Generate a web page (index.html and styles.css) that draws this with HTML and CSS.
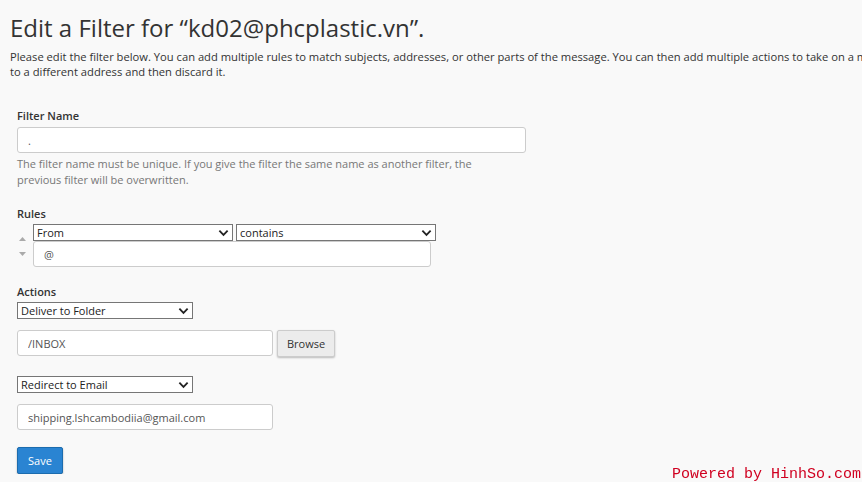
FILE: index.html
```html
<!DOCTYPE html>
<html lang="en">
<head>
  <meta charset="UTF-8">
  <title>Edit a Filter</title>
  <link rel="stylesheet" href="styles.css">
</head>
<body>
  <h1 class="page-title">Edit a Filter for “kd02@phcplastic.vn”.</h1>
  <p class="intro">Please edit the filter below. You can add multiple rules to match subjects, addresses, or other parts of the message. You can then add multiple actions to take on a message such as to deliver the message to a different address and then discard it.</p>

  <form class="filter-form">
    <div class="group">
      <label class="label">Filter Name</label>
      <input class="field name-field" type="text" value=".">
      <div class="help">The filter name must be unique. If you give the filter the same name as another filter, the previous filter will be overwritten.</div>
    </div>

    <div class="group group-rules">
      <label class="label">Rules</label>
      <div class="rule">
        <div class="arrows">
          <svg class="arrow" viewBox="0 0 7 4"><path d="M0 4 3.5 0 7 4z" /></svg>
          <svg class="arrow down" viewBox="0 0 7 4"><path d="M0 0h7L3.5 4z" /></svg>
        </div>
        <div class="rule-body">
          <div class="rule-selects">
            <div class="select sel-part"><span>From</span><svg viewBox="0 0 12 8"><path d="M1.5 1.5 6 6l4.5-4.5" /></svg></div>
            <div class="select sel-match"><span>contains</span><svg viewBox="0 0 12 8"><path d="M1.5 1.5 6 6l4.5-4.5" /></svg></div>
          </div>
          <input class="field rule-field" type="text" value="@">
        </div>
      </div>
    </div>

    <div class="group group-actions">
      <label class="label">Actions</label>
      <div class="select sel-action"><span>Deliver to Folder</span><svg viewBox="0 0 12 8"><path d="M1.5 1.5 6 6l4.5-4.5" /></svg></div>
      <div class="action-row">
        <input class="field short-field" type="text" value="/INBOX">
        <button type="button" class="btn-browse">Browse</button>
      </div>
      <div class="select sel-action"><span>Redirect to Email</span><svg viewBox="0 0 12 8"><path d="M1.5 1.5 6 6l4.5-4.5" /></svg></div>
      <div class="action-row">
        <input class="field short-field" type="text" value="shipping.lshcambodiia@gmail.com">
      </div>
    </div>

    <button type="button" class="btn-save">Save</button>
  </form>

  <div class="powered">Powered by HinhSo.com</div>
</body>
</html>
```

FILE: styles.css
```css
* {
  box-sizing: border-box;
}
body {
  margin: 0;
  padding: 0 10px;
  background: #f9f9f9;
  color: #333;
  font-family: 'Open Sans', sans-serif;
  font-size: 11px;
  overflow: hidden;
}
.page-title {
  margin: 0;
  padding-top: 12px;
  font-size: 24px;
  font-weight: 400;
  line-height: 32px;
  color: #333;
}
.intro {
  margin: 5px 0 0;
  font-size: 11.2px;
  line-height: 15px;
  width: 1065px;
}
.filter-form {
  padding: 29px 7px 0;
}
.group {
  margin-bottom: 18px;
}
.group-rules {
  margin-bottom: 17px;
}
.label {
  display: block;
  font-weight: 600;
  font-size: 11px;
  line-height: 16px;
  margin-bottom: 3px;
  color: #333;
}
.group-actions .label {
  margin-bottom: 2px;
}
.field {
  display: block;
  height: 26px;
  padding: 0 10px;
  border: 1px solid #ccc;
  border-radius: 3px;
  background: #fff;
  font-family: 'Open Sans', sans-serif;
  font-size: 11px;
  color: #555;
}
.name-field {
  width: 509px;
}
.help {
  margin-top: 3px;
  width: 500px;
  line-height: 16px;
  color: #777;
}
.rule {
  display: flex;
  margin-top: -1px;
}
.arrows {
  width: 16px;
  display: flex;
  flex-direction: column;
  padding-top: 13px;
  padding-left: 2px;
}
.arrow {
  width: 7px;
  height: 4px;
  fill: #aaa;
}
.arrow.down {
  margin-top: 11px;
}
.rule-selects {
  display: flex;
  gap: 3px;
}
.select {
  display: flex;
  align-items: center;
  justify-content: space-between;
  height: 17px;
  padding: 0 3px;
  border: 1px solid #767676;
  background: #fff;
  font-size: 11px;
  color: #222;
}
.select svg {
  width: 11px;
  height: 8px;
  fill: none;
  stroke: #222;
  stroke-width: 2;
}
.sel-part,
.sel-match {
  width: 200px;
}
.rule-field {
  width: 398px;
}
.sel-action {
  width: 176px;
}
.action-row {
  display: flex;
  gap: 4px;
  margin: 11px 0 19px;
}
.short-field {
  width: 256px;
}
.btn-browse {
  height: 27px;
  padding: 0 9px;
  border: 1px solid #ccc;
  border-radius: 2px;
  background: #ececec;
  box-shadow: 0 1px 2px rgba(0,0,0,0.25);
  font-family: 'Open Sans', sans-serif;
  font-size: 11px;
  color: #333;
}
.btn-save {
  margin-top: -2px;
  height: 27px;
  width: 46px;
  border: 1px solid #1c6cae;
  border-radius: 2px;
  background: #2a84d2;
  box-shadow: 0 1px 2px rgba(0,0,0,0.3);
  color: #fff;
  font-family: 'Open Sans', sans-serif;
  font-size: 11px;
}
.powered {
  position: fixed;
  right: 1px;
  bottom: 0;
  font-family: 'Liberation Mono', monospace;
  font-size: 15px;
  line-height: 15px;
  color: #d00020;
}
```
